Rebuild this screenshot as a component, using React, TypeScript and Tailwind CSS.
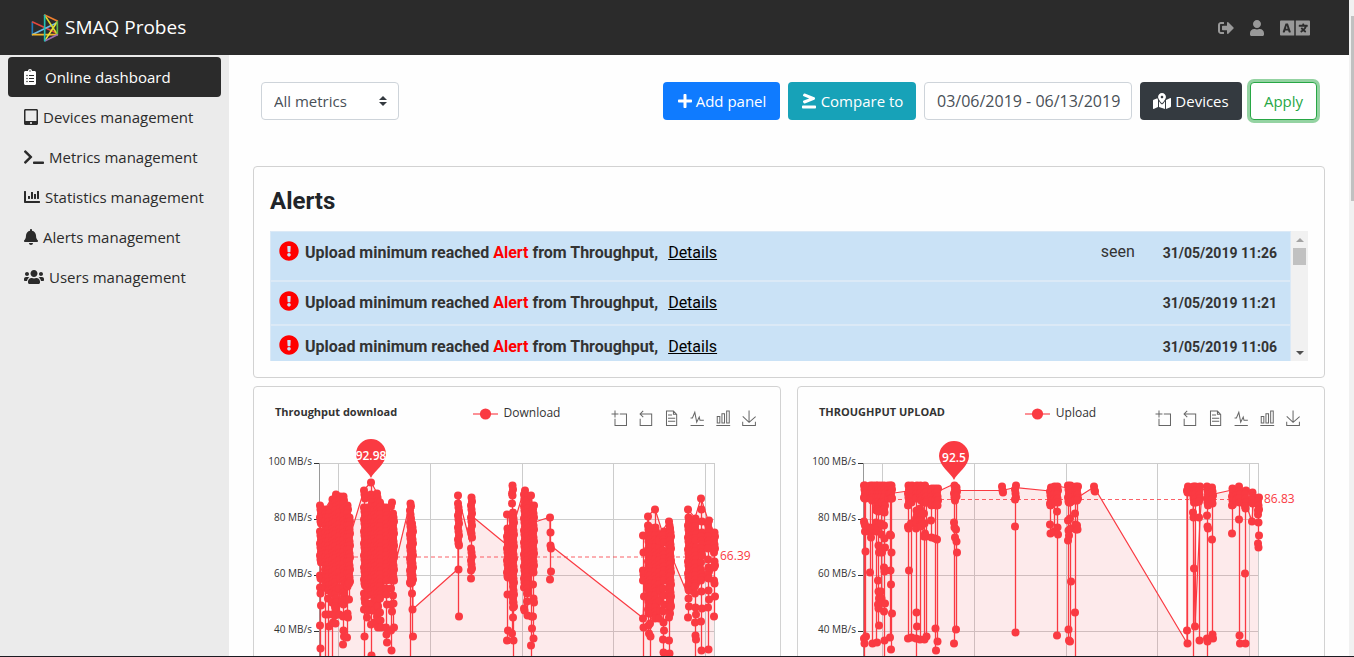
import React from "react";
import {
  FaBell,
  FaChartBar,
  FaClipboardList,
  FaExclamationCircle,
  FaGreaterThanEqual,
  FaLanguage,
  FaMapMarkedAlt,
  FaPlus,
  FaSignOutAlt,
  FaTabletAlt,
  FaTerminal,
  FaUser,
  FaUsers,
} from "react-icons/fa";

const RED = "#fa3a42";

function Logo() {
  return (
    <svg viewBox="94 40 84 84" className="h-7 w-7" fill="none" strokeWidth="5" strokeLinecap="round">
      <path d="M98 64V102" stroke="#1f78b8" />
      <path d="M99 64L172 98" stroke="#e2453c" />
      <path d="M100 101L172 66" stroke="#6cb8e6" />
      <path d="M99 102H173" stroke="#f0b429" />
      <path d="M172 64L136 119" stroke="#e8e337" />
      <path d="M136 45L172 100" stroke="#d8d92f" />
      <path d="M135 43L173 61" stroke="#f07f2e" />
      <path d="M173 63V99" stroke="#5cb548" />
      <path d="M137 120L173 102" stroke="#9a6cb4" />
      <path d="M135 44V120" stroke="#1fc0b4" />
    </svg>
  );
}

function Header() {
  return (
    <header className="flex h-[55px] shrink-0 items-center justify-between bg-[#2b2b2b] pr-[39px] pl-[31px]">
      <a href="#" className="flex items-center gap-[6px] text-[19px] text-white">
        <Logo />
        SMAQ Probes
      </a>
      <nav className="flex items-center gap-4 text-[#999999]">
        <a href="#logout" aria-label="Log out">
          <FaSignOutAlt size={16} />
        </a>
        <a href="#account" aria-label="Account">
          <FaUser className="h-4 w-[14px]" />
        </a>
        <a href="#language" aria-label="Language">
          <FaLanguage className="h-6 w-[30px]" />
        </a>
      </nav>
    </header>
  );
}

const NAV = [
  { label: "Online dashboard", icon: <FaClipboardList className="mr-1 h-4 w-3" />, active: true },
  { label: "Devices management", icon: <FaTabletAlt className="h-4 w-[14px]" /> },
  { label: "Metrics management", icon: <FaTerminal className="h-4 w-5" /> },
  { label: "Statistics management", icon: <FaChartBar className="h-4 w-4" /> },
  { label: "Alerts management", icon: <FaBell className="h-4 w-[14px]" /> },
  { label: "Users management", icon: <FaUsers className="h-4 w-5" /> },
];

function Sidebar() {
  return (
    <aside className="w-[229px] shrink-0 bg-[#ebebeb] px-2 pt-[2px]">
      {NAV.map((item) => (
        <a
          key={item.label}
          href="#"
          className={
            item.active
              ? "flex h-10 items-center gap-[5px] rounded bg-[#2b2b2b] pl-4 text-[15px] text-white"
              : "flex h-10 items-center gap-[5px] rounded pl-4 text-[15px] text-[#2b2b2b]"
          }
        >
          {item.icon}
          {item.label}
        </a>
      ))}
    </aside>
  );
}

function Toolbar() {
  return (
    <div className="flex items-center justify-between px-2">
      <div className="relative w-[138px]">
        <select
          aria-label="Metrics"
          className="h-[38px] w-full appearance-none rounded border border-[#ced4da] bg-white px-3 text-[15px] text-[#495057]"
        >
          <option>All metrics</option>
        </select>
        <svg viewBox="0 0 4 5" className="pointer-events-none absolute top-[14px] right-3 h-[10px] w-2" fill="#343a40">
          <path d="M2 0L0 2h4zm0 5L0 3h4z" />
        </svg>
      </div>
      <div className="flex gap-2 text-[15px] whitespace-nowrap">
        <button className="flex h-[38px] w-[117px] items-center justify-center gap-[3px] rounded bg-[#0f7bff] text-white">
          <FaPlus size={16} />
          Add panel
        </button>
        <button className="flex h-[38px] w-32 items-center justify-center gap-1 rounded bg-[#17a2b8] text-white">
          <FaGreaterThanEqual size={16} />
          Compare to
        </button>
        <input
          aria-label="Date range"
          defaultValue="03/06/2019 - 06/13/2019"
          className="h-[38px] w-52 rounded border border-[#ced4da] bg-white pr-1 pl-3 text-base text-[#495057]"
        />
        <button className="flex h-[38px] w-[102px] items-center justify-center gap-1 rounded bg-[#343a40] text-white">
          <FaMapMarkedAlt className="h-4 w-[18px]" />
          Devices
        </button>
        <button className="h-[38px] w-[67px] rounded border border-[#28a745] bg-white text-[#28a745] ring-3 ring-[#94d3a2]">
          Apply
        </button>
      </div>
    </div>
  );
}

const ALERTS = [
  { date: "31/05/2019 11:26", seen: true },
  { date: "31/05/2019 11:21", seen: false },
  { date: "31/05/2019 11:06", seen: false },
];

function Alerts() {
  return (
    <section className="rounded border border-[#d2d2d2] p-4 font-['Roboto',sans-serif]">
      <h2 className="mt-[2px] mb-[14px] text-2xl leading-8 font-bold text-[#212529]">Alerts</h2>
      <div className="flex h-[130px] overflow-hidden">
        <ul className="min-w-0 flex-1 overflow-hidden">
          {ALERTS.map((alert) => (
            <li
              key={alert.date}
              className={
                alert.seen
                  ? "flex h-[50px] items-start border border-[#dbe9f6] bg-[#cae2f6] px-2 pt-2 text-[#333333]"
                  : "flex h-11 items-start border border-[#dbe9f6] bg-[#cae2f6] px-2 pt-2 text-[#333333]"
              }
            >
              <FaExclamationCircle size={20} className="mt-px mr-[6px] shrink-0 text-[#ff0000]" />
              <p className="text-base leading-[26px] font-bold">
                Upload minimum reached <span className="text-[#ff0000]">Alert</span> from Throughput,
              </p>
              <a href="#details" className="ml-[10px] text-base leading-[26px] text-black underline">
                Details
              </a>
              <span className="mr-7 ml-auto leading-6">{alert.seen ? "seen" : ""}</span>
              <time className="mr-[5px] text-sm leading-[26px] font-bold">{alert.date}</time>
            </li>
          ))}
        </ul>
        <div className="flex w-[17px] flex-col items-center bg-[#f1f1f1]">
          <button aria-label="Scroll up" className="flex h-[17px] w-full items-center justify-center">
            <svg viewBox="0 0 8 4" className="h-1 w-2" fill="#a3a3a3">
              <path d="M4 0l4 4H0z" />
            </svg>
          </button>
          <div className="h-[17px] w-[13px] bg-[#c1c1c1]" />
          <button aria-label="Scroll down" className="mt-auto flex h-[17px] w-full items-center justify-center">
            <svg viewBox="0 0 8 4" className="h-1 w-2" fill="#505050">
              <path d="M4 4l4-4H0z" />
            </svg>
          </button>
        </div>
      </div>
    </section>
  );
}

const TOOLS = [
  { name: "Zoom", d: "M0,13.5h26.9 M13.5,26.9V0 M32.1,13.5H58V58H13.5 V32.1" },
  { name: "Zoom reset", d: "M22,1.4L9.9,13.5l12.3,12.3 M10.3,13.5H54.9v44.6 H10.3v-26" },
  { name: "Data view", d: "M17.5,17.3H33 M45.4,29.5h-28 M11.5,2v56H51V14.8L38.4,2H11.5z M38.4,2.2v12.7H51 M45.4,41.7h-28" },
  { name: "Line chart", d: "M4.1,28.9h7.1l9.3-22l7.4,38l9.7-19.7l3,12.8h14.9M4.1,58h51.4" },
  { name: "Bar chart", d: "M6.7,22.9h10V48h-10V22.9zM24.9,13h10v35h-10V13zM43.2,2h10v46h-10V2zM3.1,58h53.7" },
  { name: "Save as image", d: "M4.7,22.9L29.3,45.5L54.7,23.4M4.6,43.6L4.6,58L53.8,58L53.8,43.6M29.2,45.1L29.2,0" },
];

// One column of samples: x, then the dense [from, to] ranges, then the single points.
type Column = { x: number; ranges: number[][]; dots: number[] };
const col = (x: number, ranges: number[][], dots: number[] = []): Column => ({ x, ranges, dots });

const BOTTOM = 240;

const DOWNLOAD: Column[] = [
  col(66, [[75, 93], [101, 132], [145, 148]], [157, 163, 175, 195, 218, BOTTOM]),
  col(71, [[79, 151]], [157, 184, BOTTOM]),
  col(74, [[79, 160]], [168, 184, 196, BOTTOM]),
  col(78, [[69, 75], [86, 163]], [172, 184, 192, BOTTOM]),
  col(81, [[64, 178]], [185, 193]),
  col(85, [[66, 148]], [158, 184]),
  col(89, [[66, 174]], [186, 200, 206, 214]),
  col(93, [[75, 156]], [169, 183, 187, 207]),
  col(95, [[87, 153]], [169]),
  col(110, [[60, 68], [77, 155]], [163, 168, 172, 179, 206, BOTTOM]),
  col(113, [[77, 157]], [165, 173, 180, 187]),
  col(117, [[64, 164]], [52, 173, 180, 194, 225, BOTTOM]),
  col(120, [[76, 168]], [180, 192]),
  col(123, [[63, 176]], [186, 193, 197]),
  col(126, [[72, 168]], [182, 190, 197]),
  col(132, [[77, 150]], [158, 164, 174, 197, 204, 212]),
  col(137, [[72, 76], [86, 150]], [158, 174, 181, 200, 220]),
  col(139, [[83, 150]], [165, 173, 197]),
  col(156, [[73, 76], [80, 153]], [BOTTOM]),
  col(158, [[93, 152]], [163, 179, 206]),
  col(204, [[73, 115]], [65, 139, 186]),
  col(217, [[67, 107], [118, 140]], [148]),
  col(253, [[98, 147]], [84, 164, 200, 210]),
  col(258, [[55, 65], [82, 152]], [73, 164, 172, 203]),
  col(259, [[84, 177]], [187, 210, BOTTOM]),
  col(270, [[60, 157]], [178, 180]),
  col(273, [[66, 163]], [171, 185]),
  col(277, [[80, 140]], [65, 186, 198, 215, BOTTOM]),
  col(279, [[75, 142]], [154, 168, 172, 186, 208]),
  col(296, [[115, 118]], [87, 102, 141, 149]),
  col(389, [[140, 150]], [105, 122, 166, 188, 197, BOTTOM]),
  col(394, [[95, 183]], [86, 195, 203]),
  col(396, [[97, 183]], [193, 206, BOTTOM]),
  col(401, [[97, 188]], [79]),
  col(405, [[104, 110], [122, 160]], [116, 170, 180, 188]),
  col(409, [[101, 112], [120, 150]], [158, 165, 174, 181, 192, 200, 209, 222]),
  col(415, [[91, 187]], [210, 223, BOTTOM]),
  col(416, [[98, 176]], []),
  col(434, [[87, 160]], [79, 168, 176, 187]),
  col(438, [[92, 146]], [160]),
  col(441, [[88, 110], [117, 156]], [163, 177, 184, 192, 205, 209, BOTTOM]),
  col(447, [[102, 125], [139, 150]], [68, 79, 91, 132, 161, 178, 191, 220]),
  col(454, [[90, 118], [137, 148]], [129, 160, 169, 177, 219]),
  col(460, [[102, 122], [131, 137]], [150, 153, 166, 186]),
];

const UPLOAD: Column[] = [
  col(66, [[55, 68]], [91, 93, 101, 208, 213, BOTTOM]),
  col(67, [[55, 68]], [95, 121, 206]),
  col(72, [[55, 68]], [97, 102, 107, 142]),
  col(74, [[55, 70]], [98, 213]),
  col(78, [[55, 80]], [92, 101, 212]),
  col(80, [[55, 81]], [97, 115, 122, 150, 161, 168, 174, 178, 195]),
  col(83, [[55, 72]], [93, 104, 122, 161, 168, 172]),
  col(86, [[55, 82]], [95, 108, 117, 137, 141, 173, 181, 210, BOTTOM]),
  col(90, [[55, 68]], []),
  col(92, [[55, 68]], [104, 140, 154, 207]),
  col(93, [[55, 68]], [105, 122, 183, 219]),
  col(110, [[55, 75]], [96, 98, 140, 208]),
  col(113, [[55, 72]], [93, 207]),
  col(118, [[55, 68], [80, 92]], [98, 182, 196, 208, BOTTOM]),
  col(122, [[55, 70], [78, 96]], [209]),
  col(126, [[55, 72]], [83, 93, 103, 106, 209]),
  col(128, [[58, 72]], [106, 206]),
  col(133, [[58, 75]], [90, 107]),
  col(137, [[58, 75]], [108, 198, 220]),
  col(139, [[58, 75]], [109, 211]),
  col(156, [[55, 70]], [92, 97, 107, 213]),
  col(158, [[57, 66]], [99, 111, 122, 199]),
  col(204, [[56, 62]], []),
  col(217, [[55, 69]], [96, 202]),
  col(252, [[57, 75]], [94, 103]),
  col(256, [[56, 72]], [101]),
  col(259, [[56, 72]], [81, 97, 104, 205]),
  col(270, [[55, 72]], [90, 100, 105, 110, 199, 210]),
  col(272, [[55, 72]], [88, 98, 151, 211]),
  col(277, [[56, 70]], [83, 94, 99, 182, BOTTOM]),
  col(279, [[56, 70]], [95, 99]),
  col(296, [[56, 61]], []),
  col(389, [[56, 62]], [200, 213]),
  col(395, [[56, 72]], [82, 87, 138, BOTTOM]),
  col(397, [[56, 72]], [196]),
  col(401, [[56, 71]], [87, 210]),
  col(409, [[56, 75]], [85, 96, 98, 208, 211, BOTTOM]),
  col(414, [[57, 73]], [109, 204, 208]),
  col(434, [[58, 75]], [103]),
  col(438, [[60, 70]], []),
  col(441, [[56, 72]], [89, 205, 213]),
  col(447, [[60, 78]], [143, 213]),
  col(454, [[62, 73]], [91]),
  col(460, [[67, 80]], [84, 92, 105, 113, 117]),
];

type ChartProps = {
  title: string;
  series: string;
  columns: Column[];
  outline: string;
  average: { y: number; label: string };
  pin: { x: number; y: number; label: string };
};

function Chart({ title, series, columns, outline, average, pin }: ChartProps) {
  return (
    <section className="min-w-0 rounded border border-[#d2d2d2]">
      <div className="grid h-[43px] grid-cols-[1fr_auto_1fr] items-start pt-4 pr-[22px] pl-[21px]">
        <h3 className="text-[11px] leading-[18px] font-bold text-[#333333]">{title}</h3>
        <button className="flex items-center gap-[6px] text-xs leading-5 text-[#333333]">
          <svg viewBox="0 0 25 14" className="h-[14px] w-[25px]">
            <path d="M0 8H25" stroke={RED} strokeWidth="1.4" strokeOpacity="0.8" />
            <circle cx="12.5" cy="8" r="5.6" fill={RED} />
          </svg>
          {series}
        </button>
        <div className="mt-[7px] mr-px flex justify-end gap-[10px]">
          {TOOLS.map((tool) => (
            <button key={tool.name} aria-label={tool.name}>
              <svg viewBox="-2 -2 62 62" className="h-4 w-4" fill="none" stroke="#666666" strokeWidth="3.9">
                <path d={tool.d} />
              </svg>
            </button>
          ))}
        </div>
      </div>
      <svg viewBox="0 0 526 240" className="block w-full">
        <g stroke="#cccccc">
          {[33.5, 89.5, 145.5, 201.5].map((y) => (
            <path key={y} d={`M65 ${y}H461`} />
          ))}
          {[84.5, 176.5, 268.5, 359.5, 451.5, 460.5].map((x) => (
            <path key={x} d={`M${x} 33V240`} />
          ))}
        </g>
        <path d="M65.5 33V240" stroke="#999999" />
        <path d="M60 33.5h5M60 89.5h5M60 145.5h5M60 201.5h5" stroke="#333333" />
        <g fill="#333333" fontSize="10" textAnchor="end">
          {[100, 80, 60, 40].map((value, i) => (
            <text key={value} x="58" y={35 + i * 56}>
              {value} MB/s
            </text>
          ))}
        </g>
        <path d={`M65 240L${outline}V240Z`} fill={RED} fillOpacity="0.1" />
        <path d={`M${outline}`} fill="none" stroke={RED} strokeWidth="1.2" strokeLinejoin="round" />
        <path d={`M65 ${average.y}H461`} stroke={RED} strokeOpacity="0.8" strokeWidth="1.2" strokeDasharray="4 3" />
        {columns.map((c) => {
          const all = [...c.ranges.flat(), ...c.dots];
          const samples = [...c.dots];
          c.ranges.forEach(([from, to]) => {
            for (let y = from; y < to; y += 4) samples.push(y);
            samples.push(to);
          });
          return (
            <g key={c.x} fill={RED}>
              <path d={`M${c.x + 0.5} ${Math.min(...all)}V${Math.max(...all)}`} stroke={RED} strokeWidth="1.3" />
              {samples.map((y, i) => (
                <circle key={i} cx={c.x + ((i * 7) % 3) * 0.5} cy={y + 0.4} r="4" />
              ))}
            </g>
          );
        })}
        <path
          d={`M${pin.x} ${pin.y + 24}C${pin.x - 3} ${pin.y + 17} ${pin.x - 15} ${pin.y + 10} ${pin.x - 15} ${pin.y}a15 15 0 0 1 30 0C${pin.x + 15} ${pin.y + 10} ${pin.x + 3} ${pin.y + 17} ${pin.x} ${pin.y + 24}Z`}
          fill={RED}
        />
        <text x={pin.x} y={pin.y + 6} fill="#ffffff" fontSize="12" fontWeight="600" textAnchor="middle">
          {pin.label}
        </text>
        <text x="466" y={average.y + 3} fill={RED} fontSize="12">
          {average.label}
        </text>
      </svg>
    </section>
  );
}

const DOWNLOAD_OUTLINE =
  "65 75L71 79L81 63L89 66L96 88L97 103L110 60L117 52L123 63L132 77L137 72L142 100L143 127L156 73L158 93L159 179L204 139V65L216 112L217 67L219 87L253 115L258 82L261 90L270 60L277 65L281 92L296 87V115L389 188L394 86L401 79L408 101L415 91L418 127L433 163L434 79L441 88L447 68L454 90L460 102";

const UPLOAD_OUTLINE =
  "65 56H96V63L110 61L112 56L140 58L141 61L156 54L159 60.5H204L217 57.5L252 61L259 56L270 58L282 66L296 57L389 213V57L395 62L397 196L402 90L404 60L415 57L416 64L434 60L441 56L448 75L454 91L456 62L460 67";

export default function App() {
  return (
    <div className="flex h-screen overflow-hidden border-b border-[#1b1b22] bg-[#fefefe] font-['Open_Sans','Noto_Sans',sans-serif]">
      <div className="flex min-w-0 flex-1 flex-col">
        <Header />
        <div className="flex min-h-0 flex-1">
          <Sidebar />
          <main className="min-w-0 flex-1 overflow-hidden px-6 pt-[27px]">
            <Toolbar />
            <div className="mt-[46px]">
              <Alerts />
            </div>
            <div className="mt-2 grid grid-cols-2 gap-4">
              <Chart
                title="Throughput download"
                series="Download"
                columns={DOWNLOAD}
                outline={DOWNLOAD_OUTLINE}
                average={{ y: 127, label: "66.39" }}
                pin={{ x: 117, y: 24, label: "92.98" }}
              />
              <Chart
                title="THROUGHPUT UPLOAD"
                series="Upload"
                columns={UPLOAD}
                outline={UPLOAD_OUTLINE}
                average={{ y: 69.5, label: "86.83" }}
                pin={{ x: 156, y: 26, label: "92.5" }}
              />
            </div>
          </main>
        </div>
      </div>
      <div className="w-[5px] shrink-0 bg-[#f1f1f1] pt-4 pl-[2px]">
        <div className="h-[185px] bg-[#c1c1c1]" />
      </div>
    </div>
  );
}
